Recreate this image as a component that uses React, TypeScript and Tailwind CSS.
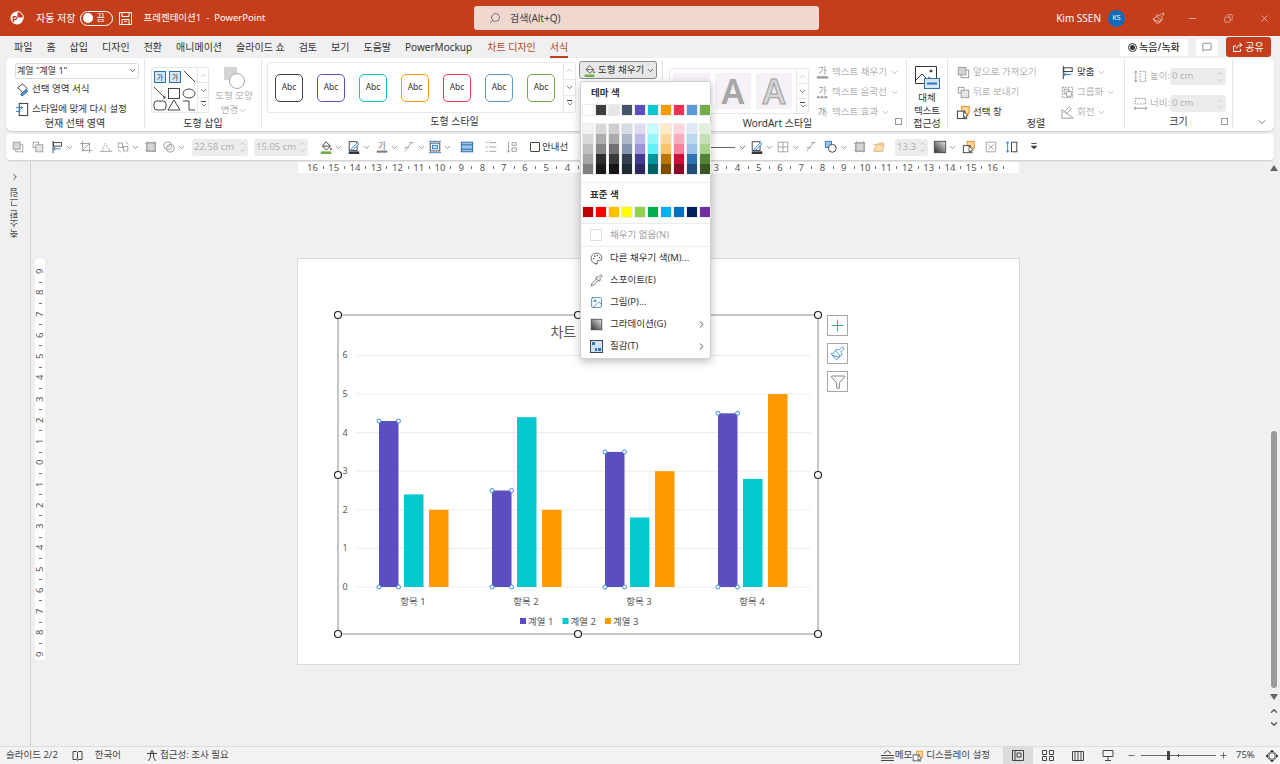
import React from "react";
import {
  ChevronDown,
  ChevronRight,
  ChevronUp,
  Copy,
  Funnel,
  Image,
  MessageSquare,
  Minus,
  Paintbrush,
  Palette,
  Pipette,
  Plus,
  Search,
  X,
} from "lucide-react";

const TABS = ["파일", "홈", "삽입", "디자인", "전환", "애니메이션", "슬라이드 쇼", "검토", "보기", "도움말", "PowerMockup"];
const THEME = ["#ffffff", "#3d3d3d", "#e7e6e6", "#44546a", "#5b4fc0", "#06c9cf", "#ff9a00", "#f23058", "#5b9bd5", "#70ad47"];
const SHADES = [
  ["#f2f2f2", "#d9d9d9", "#bfbfbf", "#a6a6a6", "#808080"],
  ["#d8d8d8", "#aeaeae", "#868686", "#2e2e2e", "#1a1a1a"],
  ["#d0cece", "#aeabab", "#757070", "#3a3838", "#171616"],
  ["#d6dce5", "#adb9ca", "#8497b0", "#333f50", "#222a35"],
  ["#dedcf2", "#bdb9e6", "#9d95d9", "#433a94", "#2d2763"],
  ["#c9fbfc", "#93f7fa", "#5df3f7", "#049599", "#026366"],
  ["#ffebcc", "#ffd699", "#ffc266", "#bf7300", "#804d00"],
  ["#fcd5dd", "#f9acbc", "#f6839b", "#d00d3a", "#8b0826"],
  ["#deebf7", "#bdd7ee", "#9dc3e6", "#2e75b6", "#1f4e79"],
  ["#e2efda", "#c5e0b4", "#a9d18e", "#548235", "#385723"],
];
const STANDARD = ["#c00000", "#ff0000", "#ffc000", "#ffff00", "#92d050", "#00b050", "#00b0f0", "#0070c0", "#002060", "#7030a0"];
const STYLE_COLORS = ["#404040", "#5b4fc0", "#06c9cf", "#ff9a00", "#f23058", "#5b9bd5", "#70ad47"];

// 막대 차트 데이터
const SERIES = [
  { color: "#5b4fc0", values: [4.3, 2.5, 3.5, 4.5], offset: 0 },
  { color: "#06c9cf", values: [2.4, 4.4, 1.8, 2.8], offset: 25 },
  { color: "#ff9a00", values: [2, 2, 3, 5], offset: 50 },
];
const GROUP_X = [379, 492, 605, 718];
const yOf = (v: number) => 587 - v * 38.6;

const Caret = ({ className = "text-[#555]" }: { className?: string }) => (
  <ChevronDown size={9} strokeWidth={2} className={className} />
);

// 작은 아이콘 묶음 (16x16)
const Ico = ({ name, c = "#9a9a9a", size = 16 }: { name: string; c?: string; size?: number }) => {
  const common = { fill: "none", stroke: c, strokeWidth: 1 };
  return (
    <svg width={size} height={size} viewBox="0 0 16 16" className="shrink-0">
      {name === "front" && (
        <>
          <rect x="5.5" y="5.5" width="8" height="8" {...common} />
          <rect x="2.5" y="2.5" width="8" height="8" fill="#d5d5d5" stroke={c} />
        </>
      )}
      {name === "back" && (
        <>
          <rect x="2.5" y="2.5" width="6" height="6" {...common} />
          <rect x="5.5" y="5.5" width="8" height="8" fill="#e5e5e5" stroke={c} />
        </>
      )}
      {name === "align" && (
        <>
          <path d="M3.5 1v14" stroke="#333" />
          <rect x="4" y="3" width="9" height="4" fill="#fff" stroke="#333" />
          <path d="M4 10h8M6 8l-2 2 2 2" stroke="#1f77c9" fill="none" />
        </>
      )}
      {name === "crop" && <path d="M4 1v11h11M1 4h11v11M3 13L13 3" {...common} />}
      {name === "edit" && <path d="M3 13L7 4l6 9H3zM1 13h14" {...common} strokeDasharray="2 1" />}
      {name === "text" && (
        <>
          <rect x="2.5" y="3.5" width="5" height="5" {...common} />
          <rect x="8.5" y="7.5" width="5" height="5" {...common} />
          <path d="M2 11l4 3M11 2l3 3" {...common} />
        </>
      )}
      {name === "shapeCircle" && (
        <>
          <circle cx="6.5" cy="6.5" r="4.5" {...common} />
          <circle cx="9.5" cy="9.5" r="4.5" {...common} />
          <path d="M6 9l4-4" {...common} />
        </>
      )}
      {name === "fill" && (
        <>
          <path d="M8 2l5 5-4.5 4.5L4 7l4-5z" fill="#fff" stroke="#333" />
          <path d="M4 7h9" stroke="#333" />
          <circle cx="13.5" cy="10" r="1" fill="#333" />
          <rect x="2" y="13" width="12" height="3" fill={c} />
        </>
      )}
      {name === "pen" && (
        <>
          <rect x="2.5" y="2" width="9" height="10" fill="#fff" stroke="#333" />
          <path d="M5 10l7-7 1.5 1.5-7 7L4 12z" fill="#fff" stroke="#1f77c9" />
          <rect x="2" y="13" width="12" height="3" fill={c} />
        </>
      )}
      {name === "gaText" && (
        <>
          <text x="8" y="10" fontSize="10" textAnchor="middle" fill={c}>
            가
          </text>
          <rect x="2" y="12" width="12" height="2.5" fill={c} />
        </>
      )}
      {name === "gaOutline" && (
        <>
          <text x="8" y="10" fontSize="10" textAnchor="middle" fill={c}>
            가
          </text>
          <path d="M2 13h12" stroke={c} strokeWidth="2" strokeDasharray="3 1" />
        </>
      )}
      {name === "gaFx" && (
        <>
          <text x="9" y="12" fontSize="10" textAnchor="middle" fill="#c8c8c8">
            가
          </text>
          <text x="7" y="11" fontSize="10" textAnchor="middle" fill={c}>
            가
          </text>
        </>
      )}
      {name === "tri" && <path d="M2 14h12L2 5zM4 8l6-6 2 2-6 6" {...common} />}
      {name === "tableH" && (
        <>
          <rect x="2.5" y="3.5" width="11" height="9" fill="#fff" stroke="#333" />
          <rect x="5" y="6" width="6" height="4" fill="#bcd6ef" stroke="#1f77c9" />
          <path d="M1 1.5h14M1 14.5h14" stroke="#1f77c9" />
        </>
      )}
      {name === "box" && (
        <>
          <rect x="1.5" y="2.5" width="13" height="11" fill="#9dc3e6" stroke="#1f5f9f" />
          <path d="M1.5 5.5h13M1.5 10.5h13" stroke="#1f5f9f" />
        </>
      )}
      {name === "bullet" && <path d="M2 3h2M6 3h8M2 8h2M6 8h8M2 13h2M6 13h8" {...common} />}
      {name === "sortText" && <path d="M4 2v12M2 12l2 2 2-2M8 3h5v3H8zM8 9h5v4H8z" {...common} />}
      {name === "table" && <path d="M2.5 2.5h11v11h-11zM8 2.5v11M2.5 8h11" {...common} />}
      {name === "slash" && <path d="M3 13L11 3M8 3h5M3 9l5-1" {...common} />}
      {name === "shapeBlue" && (
        <>
          <rect x="1.5" y="1.5" width="7" height="7" fill="#9dc3e6" stroke="#1f77c9" />
          <circle cx="9.5" cy="9.5" r="4.5" fill="#fff" stroke="#333" />
        </>
      )}
      {name === "dashBox" && (
        <>
          <rect x="3" y="3" width="10" height="10" fill="#d5d5d5" stroke={c} />
          <path d="M1 4h14M1 12h14M4 1v14M12 1v14" stroke={c} strokeDasharray="1 1" />
        </>
      )}
      {name === "folder" && <path d="M1.5 5h5l1-1.5h6v2H5L2 13h10l2-7.5" fill="#f6deb0" stroke="#dcb978" />}
      {name === "gradient" && (
        <>
          <defs>
            <linearGradient id="gr" x1="0" y1="1" x2="1" y2="0">
              <stop offset="0" stopColor="#2d2d2d" />
              <stop offset="1" stopColor="#e8e8e8" />
            </linearGradient>
          </defs>
          <rect x="1.5" y="1.5" width="13" height="13" fill="url(#gr)" stroke="#444" />
        </>
      )}
      {name === "selectPane" && (
        <>
          <rect x="6" y="1.5" width="8" height="8" fill="#ffd699" stroke="#e08a1e" />
          <rect x="1.5" y="6.5" width="8" height="8" fill="#fff" stroke="#333" />
          <path d="M8 7l5 4.5-2.5.3 1.3 2.7-1.3.5-1.2-2.7L8 13.5z" fill="#fff" stroke="#333" strokeWidth=".8" />
        </>
      )}
      {name === "xbox" && <path d="M2.5 2.5h11v11h-11zM5 5l6 6M11 5l-6 6" {...common} />}
      {name === "resize" && (
        <>
          <path d="M3 2v12M1.5 4L3 2l1.5 2M1.5 12L3 14l1.5-2" stroke="#1f77c9" fill="none" />
          <rect x="7.5" y="2.5" width="6" height="11" fill="#fff" stroke="#333" />
        </>
      )}
      {name === "more" && <path d="M5 4h6M5 7l3 3 3-3z" fill="#333" stroke="#333" />}
      {name === "group" && (
        <>
          <path d="M2.5 2.5h11v11h-11z" {...common} strokeDasharray="2 1" />
          <rect x="4.5" y="4.5" width="5" height="5" {...common} />
          <rect x="7" y="7" width="5" height="5" fill="#fff" stroke={c} />
        </>
      )}
      {name === "heightI" && (
        <>
          <path d="M3 2v12M1.5 4L3 2l1.5 2M1.5 12L3 14l1.5-2" {...common} />
          <rect x="7.5" y="2.5" width="6" height="11" {...common} strokeDasharray="2 1" />
        </>
      )}
      {name === "widthI" && (
        <>
          <rect x="2.5" y="2.5" width="11" height="6" {...common} strokeDasharray="2 1" />
          <path d="M1 13h14M3 11.5L1 13l2 1.5M13 11.5l2 1.5-2 1.5" {...common} />
        </>
      )}
      {name === "paintFormat" && (
        <>
          <path d="M3 6l5-4 5 5-4 5z" fill="#fff" stroke="#333" />
          <path d="M6 13l6-5 1.5 2-6 5z" fill="#5b9bd5" stroke="#1f5f9f" />
        </>
      )}
      {name === "resetStyle" && (
        <>
          <rect x="4.5" y="1.5" width="9" height="13" fill="#fff" stroke="#333" />
          <path d="M1 6h7M6 4l2 2-2 2M1 10h5" stroke="#1f77c9" fill="none" />
        </>
      )}
    </svg>
  );
};

const Tool = ({ w, name, c, caret }: { w: number; name: string; c?: string; caret?: boolean }) => (
  <div style={{ width: w }} className="flex items-center justify-center shrink-0">
    <Ico name={name} c={c} size={14} />
    {caret && <Caret className="text-[#777] ml-px" />}
  </div>
);

const Spin = ({ w, value }: { w: number; value: string }) => (
  <div style={{ width: w }} className="h-[17px] bg-[#ececec] rounded-[3px] flex items-center justify-between pl-[2px] pr-[2px] text-[9.5px] text-[#b3b3b3] shrink-0">
    <span>{value}</span>
    <span className="flex flex-col">
      <ChevronUp size={7} className="text-[#aaa]" />
      <ChevronDown size={7} className="text-[#aaa]" />
    </span>
  </div>
);

const Scroller = () => (
  <div className="w-[12px] flex flex-col border-l border-[#e8e8e8] shrink-0">
    <div className="flex-1 flex items-center justify-center border-b border-[#e8e8e8]">
      <ChevronUp size={9} className="text-[#bbb]" />
    </div>
    <div className="flex-1 flex items-center justify-center border-b border-[#e8e8e8]">
      <ChevronDown size={9} className="text-[#444]" />
    </div>
    <div className="flex-1 flex flex-col items-center justify-center">
      <span className="w-[5px] h-px bg-[#444] mb-px" />
      <ChevronDown size={8} className="text-[#444] -mt-[2px]" />
    </div>
  </div>
);

const Group = ({
  w,
  label,
  labelPr = 0,
  launcher,
  children,
}: {
  w: number;
  label: string;
  labelPr?: number;
  launcher?: boolean;
  children: React.ReactNode;
}) => (
  <div style={{ width: w }} className="h-full flex flex-col shrink-0 relative border-r border-[#e4e4e4] my-[2px] max-h-[68px]">
    <div className="h-[57px] flex">{children}</div>
    <div style={{ paddingRight: labelPr }} className="text-center text-[10px] leading-[13px] text-[#333]">
      {label}
    </div>
    {launcher && <span className="absolute right-[4px] bottom-[3px] w-[7px] h-[7px] border border-[#999]" />}
  </div>
);

const Opt = ({ icon, text, dis, caret, c }: { icon: string; text: string; dis?: boolean; caret?: boolean; c?: string }) => (
  <div className={`h-[20px] flex items-center gap-[2px] text-[9.5px] whitespace-nowrap ${dis ? "text-[#b3b3b3]" : "text-[#333]"}`}>
    <Ico name={icon} size={15} c={c} />
    <span>{text}</span>
    {caret && <Caret className="text-[#aaa] ml-px" />}
  </div>
);

const Swatch = ({ color }: { color: string }) => (
  <span style={{ backgroundColor: color }} className="w-[10px] h-[10px] outline outline-[#ececec]" />
);

const MenuItem = ({ icon, text, sub, dis }: { icon: React.ReactNode; text: string; sub?: boolean; dis?: boolean }) => (
  <div className={`h-[22px] flex items-center text-[9.5px] relative pl-[9px] ${dis ? "text-[#a0a0a0]" : "text-[#333]"}`}>
    <span className="w-[20px] flex items-center">{icon}</span>
    <span>{text}</span>
    {sub && <ChevronRight size={11} className="absolute right-[3px] text-[#444]" />}
  </div>
);

const FillMenu = () => (
  <div className="absolute left-0 top-[19px] z-50 w-[131px] h-[278px] bg-white border border-[#d0d0d0] rounded-[3px] shadow-[0_3px_8px_rgba(0,0,0,0.25)]">
    <div className="h-[22px] pl-[10px] flex items-center text-[9.5px] font-bold text-[#333]">테마 색</div>
    <div className="pl-[2px] flex gap-[3px] mt-[1px]">
      {THEME.map((c) => (
        <Swatch key={c} color={c} />
      ))}
    </div>
    <div className="pl-[2px] flex gap-[3px] mt-[9px]">
      {SHADES.map((col, i) => (
        <div key={i} className="flex flex-col outline outline-[#ececec]">
          {col.map((c) => (
            <span key={c} style={{ backgroundColor: c }} className="w-[10px] h-[10px]" />
          ))}
        </div>
      ))}
    </div>
    <div className="h-px bg-[#ececec] mt-[8px]" />
    <div className="h-[24px] pl-[9px] flex items-center text-[9.5px] font-bold text-[#333]">표준 색</div>
    <div className="pl-[2px] flex gap-[3px]">
      {STANDARD.map((c) => (
        <Swatch key={c} color={c} />
      ))}
    </div>
    <div className="h-px bg-[#ececec] mt-[6px]" />
    <MenuItem dis text="채우기 없음(N)" icon={<span className="w-[12px] h-[12px] border border-[#e0e0e0]" />} />
    <div className="h-px bg-[#ececec]" />
    <MenuItem text="다른 채우기 색(M)..." icon={<Palette size={13} strokeWidth={1.3} className="text-[#333]" />} />
    <MenuItem text="스포이트(E)" icon={<Pipette size={13} strokeWidth={1.2} className="text-[#333]" />} />
    <MenuItem text="그림(P)..." icon={<Image size={13} strokeWidth={1.3} className="text-[#1f5f9f]" />} />
    <MenuItem sub text="그라데이션(G)" icon={<Ico name="gradient" size={13} />} />
    <MenuItem
      sub
      text="질감(T)"
      icon={
        <svg width="13" height="13" viewBox="0 0 13 13">
          <rect x=".5" y=".5" width="12" height="12" fill="#cfe3f5" stroke="#444" />
          <path d="M2 2h3v3H2zM8 8h3v3H8zM5 8h2v3H5z" fill="#2e75b6" />
        </svg>
      }
    />
  </div>
);

const Chart = () => (
  <svg width="721" height="405" viewBox="298 259 721 405" className="block" fontFamily="'Noto Sans','Noto Sans CJK KR',sans-serif">
    <text x="578" y="337" fontSize="14" fill="#595959" textAnchor="middle">
      차트 제목
    </text>
    {[0, 1, 2, 3, 4, 5, 6].map((v) => (
      <g key={v}>
        <line x1="357" x2="810" y1={yOf(v)} y2={yOf(v)} stroke="#ececec" />
        <text x="345" y={yOf(v) + 3} fontSize="9" fill="#595959" textAnchor="middle">
          {v}
        </text>
      </g>
    ))}
    {SERIES.map((s) =>
      s.values.map((v, i) => (
        <rect key={s.color + i} x={GROUP_X[i] + s.offset} y={yOf(v)} width="19.5" height={v * 38.6} fill={s.color} />
      ))
    )}
    {SERIES[0].values.map((v, i) =>
      [
        [GROUP_X[i], yOf(v)],
        [GROUP_X[i] + 19.5, yOf(v)],
        [GROUP_X[i], 587],
        [GROUP_X[i] + 19.5, 587],
      ].map(([x, y], k) => <circle key={i + "-" + k} cx={x} cy={y} r="2" fill="#fff" stroke="#3d8ddb" />)
    )}
    {GROUP_X.map((x, i) => (
      <text key={x} x={x + 34} y="605" fontSize="9.5" fill="#595959" textAnchor="middle">
        항목 {i + 1}
      </text>
    ))}
    {SERIES.map((s, i) => (
      <g key={s.color}>
        <rect x={520 + i * 42.5} y="618" width="6" height="6" fill={s.color} />
        <text x={528 + i * 42.5} y="625" fontSize="9.5" fill="#595959">
          계열 {i + 1}
        </text>
      </g>
    ))}
    <rect x="338" y="315" width="480" height="319" fill="none" stroke="#8c8c8c" />
    {[
      [338, 315],
      [578, 315],
      [818, 315],
      [338, 475],
      [818, 475],
      [338, 634],
      [578, 634],
      [818, 634],
    ].map(([x, y]) => (
      <circle key={x + "-" + y} cx={x} cy={y} r="3.5" fill="#fff" stroke="#222" strokeWidth="1.2" />
    ))}
  </svg>
);

const ChartBtn = ({ children }: { children: React.ReactNode }) => (
  <div className="w-[21px] h-[21px] bg-white border border-[#a8a8a8] flex items-center justify-center">{children}</div>
);

const HRuler = () => {
  const nums = Array.from({ length: 33 }, (_, i) => Math.abs(16 - i));
  return (
    <div className="ml-[267px] w-[721px] h-[11px] bg-white flex items-center pl-[8px] text-[9.5px] leading-none text-[#555] overflow-hidden">
      {nums.map((n, i) => (
        <React.Fragment key={i}>
          <span className="w-[13px] text-center shrink-0">{n}</span>
          <span className="w-[8.25px] shrink-0 flex items-center justify-center">
            <span className="w-px h-[3px] bg-[#777]" />
          </span>
        </React.Fragment>
      ))}
    </div>
  );
};

const VRuler = () => {
  const nums = Array.from({ length: 19 }, (_, i) => Math.abs(9 - i));
  return (
    <div className="ml-[4px] w-[10px] h-[401px] bg-white flex flex-col items-center pt-[6px] text-[9.5px] leading-none text-[#555] overflow-hidden shrink-0">
      {nums.map((n, i) => (
        <React.Fragment key={i}>
          <span className="h-[13px] flex items-center justify-center shrink-0 [writing-mode:vertical-rl] rotate-180">{n}</span>
          <span className="h-[8.25px] shrink-0 flex items-center justify-center">
            <span className="w-[3px] h-px bg-[#777]" />
          </span>
        </React.Fragment>
      ))}
    </div>
  );
};

export default function App() {
  return (
    <div className="w-[1280px] h-[764px] overflow-hidden flex flex-col bg-[#f0f0f0] [font-family:'Noto_Sans','Noto_Sans_CJK_KR',sans-serif] text-[#333]">
      {/* 제목 표시줄 */}
      <div className="h-[36px] bg-[#c43e1c] flex items-center text-white shrink-0 relative">
        <svg width="14" height="14" viewBox="0 0 14 14" className="ml-[10px]">
          <circle cx="7" cy="7" r="6.5" fill="#fff" />
          <path d="M7 .5a6.5 6.5 0 0 1 6.5 6.5H7z" fill="#c43e1c" stroke="#fff" />
          <text x="2" y="11" fontSize="9" fontWeight="700" fill="#c43e1c">
            P
          </text>
        </svg>
        <span className="ml-[12px] text-[10px]">자동 저장</span>
        <div className="ml-[5px] w-[33px] h-[15px] rounded-full border border-white flex items-center pl-[2px] gap-[3px] text-[9px]">
          <span className="w-[10px] h-[10px] rounded-full bg-white" />끔
        </div>
        <svg width="13" height="13" viewBox="0 0 13 13" className="ml-[6px]" fill="none" stroke="#fff">
          <path d="M.5.5h12v12H.5zM3 .5v4h7v-4M3 12.5v-5h7v5M5 9.5h3" />
        </svg>
        <span className="ml-[11px] text-[9.5px]">프레젠테이션1&nbsp; -&nbsp; PowerPoint</span>
        <div className="absolute left-[474px] top-[6px] w-[345px] h-[24px] bg-[#f0d8d1] rounded-[3px] flex items-center pl-[15px] text-[#444] text-[10px]">
          <Search size={12} strokeWidth={1.3} className="-scale-x-100" />
          <span className="ml-[9px]">검색(Alt+Q)</span>
        </div>
        <div className="ml-auto flex items-center pr-[10px]">
          <span className="text-[10px] mr-[7px]">Kim SSEN</span>
          <span className="w-[17px] h-[17px] rounded-full bg-[#0f6cbd] flex items-center justify-center text-[7px]">KS</span>
          <Paintbrush size={13} strokeWidth={1.2} className="ml-[27px]" />
          <Minus size={11} strokeWidth={1.2} className="ml-[22px]" />
          <Copy size={9} strokeWidth={1.2} className="ml-[26px] -scale-x-100" />
          <X size={11} strokeWidth={1.2} className="ml-[26px]" />
        </div>
      </div>

      {/* 리본 탭 */}
      <div className="h-[22px] flex items-center pl-[14px] gap-[14px] text-[10px] shrink-0">
        {TABS.map((t) => (
          <span key={t} className="whitespace-nowrap">
            {t}
          </span>
        ))}
        <span className="text-[#b7472a] ml-px">차트 디자인</span>
        <span className="text-[#b7472a] h-[22px] flex items-center border-b-2 border-[#c43e1c] pt-[2px]">서식</span>
        <div className="ml-auto flex items-center pr-[9px] gap-[8px]">
          <div className="w-[68px] h-[17px] bg-white rounded-[3px] flex items-center justify-center gap-[2px] font-medium text-[10px]">
            <span className="w-[9px] h-[9px] rounded-full border border-[#333] flex items-center justify-center">
              <span className="w-[5px] h-[5px] rounded-full bg-[#333]" />
            </span>
            녹음/녹화
          </div>
          <div className="w-[22px] h-[17px] bg-white rounded-[3px] flex items-center justify-center">
            <MessageSquare size={10} strokeWidth={1.3} />
          </div>
          <div className="w-[45px] h-[20px] -my-px bg-[#c43e1c] text-white rounded-[3px] flex items-center justify-center gap-[2px] text-[10px]">
            <svg width="10" height="10" viewBox="0 0 10 10" fill="none" stroke="#fff">
              <path d="M3 4H.5v5.5h7V7M3.5 6.5C4 4 6 3 8 3M6.5 .8L9 3 6.5 5.2" />
            </svg>
            공유
          </div>
        </div>
      </div>

      {/* 리본 */}
      <div className="mx-[6px] h-[73px] bg-white rounded-[6px] shadow-[0_1px_2px_rgba(0,0,0,0.15)] flex shrink-0 relative z-10">
        <Group w={139} label="현재 선택 영역">
          <div className="pl-[9px] pt-[3px] flex flex-col">
            <div className="w-[124px] h-[17px] border border-[#dcdcdc] rounded-[3px] flex items-center justify-between px-[1px] text-[9px]">
              <span>계열 "계열 1"</span>
              <Caret className="text-[#333]" />
            </div>
            <div className="mt-[1px]">
              <Opt icon="paintFormat" text="선택 영역 서식" />
              <Opt icon="resetStyle" text="스타일에 맞게 다시 설정" />
            </div>
          </div>
        </Group>
        <Group w={117} label="도형 삽입">
          <div className="ml-[6px] mt-[7px] w-[58px] h-[46px] border border-[#e8e8e8] rounded-[3px] flex">
            <svg width="45" height="44" viewBox="0 0 45 44" fill="none" stroke="#444" className="shrink-0">
              <rect x="2.5" y="3.5" width="11" height="11" fill="#d6e6f6" stroke="#2e75b6" />
              <rect x="17.5" y="3.5" width="11" height="11" fill="#d6e6f6" stroke="#2e75b6" />
              <text x="8" y="12" fontSize="7" textAnchor="middle" fill="#333" stroke="none">
                가
              </text>
              <text x="23" y="12" fontSize="7" textAnchor="middle" fill="#333" stroke="none">
                가
              </text>
              <path d="M32 3l11 11M2 19l11 11M11 30h2v-2" />
              <rect x="16.5" y="20.5" width="11" height="10" />
              <ellipse cx="37" cy="25.5" rx="6" ry="4.5" />
              <rect x="2" y="33" width="12" height="9" rx="3" />
              <path d="M22 32l6 10H16zM31 33h6v9h6" />
            </svg>
            <Scroller />
          </div>
          <div className="ml-[4px] mt-[6px] w-[42px] flex flex-col items-center text-[9.5px] leading-[14px] text-[#b3b3b3]">
            <svg width="24" height="24" viewBox="0 0 24 24" className="-mb-[1px] shrink-0">
              <rect x="2" y="1" width="13" height="13" fill="#d4d4d4" />
              <circle cx="15" cy="15" r="7.5" fill="#fff" stroke="#aaa" />
            </svg>
            <span>도형 모양</span>
            <span className="flex items-center">
              변경 <Caret className="text-[#bbb]" />
            </span>
          </div>
        </Group>
        <Group w={401} label="도형 스타일" labelPr={15}>
          <div className="ml-[5px] mt-[2px] w-[309px] h-[51px] border border-[#e8e8e8] rounded-[3px] flex justify-between">
            <div className="flex items-center pl-[7px] gap-[14px]">
              {STYLE_COLORS.map((c) => (
                <div
                  key={c}
                  style={{ borderColor: c }}
                  className="w-[28px] h-[28px] border-[1.5px] rounded-[5px] flex items-center justify-center text-[8.5px]"
                >
                  Abc
                </div>
              ))}
            </div>
            <Scroller />
          </div>
          <div className="ml-[3px] relative w-[78px] h-[18px] mt-[1px] border border-[#8a8a8a] rounded-[3px] bg-[#e8e8e8] flex items-center pl-[3px] gap-[2px] text-[9.5px] whitespace-nowrap">
            <Ico name="fill" c="#70ad47" size={13} />
            <span>도형 채우기</span>
            <Caret className="text-[#333]" />
            <FillMenu />
          </div>
        </Group>
        <Group w={244} label="WordArt 스타일" launcher labelPr={14}>
          <div className="ml-[6px] mt-[8px] w-[140px] h-[46px] border border-[#e8e8e8] rounded-[3px] flex justify-between">
            <div className="flex items-center pl-[3px] gap-[5px]">
              <div className="w-[37px] h-[36px] bg-[#f5f1f6] flex items-center justify-center text-[34px] font-semibold leading-none text-transparent">A</div>
              <div className="w-[36px] h-[36px] bg-[#f5f1f6] flex items-center justify-center text-[34px] font-semibold leading-none text-[#a6a6a6]">A</div>
              <div className="w-[36px] h-[36px] bg-[#f5f1f6] flex items-center justify-center text-[34px] font-semibold leading-none text-[#d5d5d5] [-webkit-text-stroke:1px_#a0a0a0]">A</div>
            </div>
            <Scroller />
          </div>
          <div className="ml-[6px] pt-[2px]">
            <Opt dis caret icon="gaText" text="텍스트 채우기" />
            <Opt dis caret icon="gaOutline" text="텍스트 윤곽선" />
            <Opt dis caret icon="gaFx" text="텍스트 효과" />
          </div>
        </Group>
        <Group w={41} label="접근성">
          <div className="w-full pt-[5px] flex flex-col items-center text-[9.5px] leading-[13px]">
            <svg width="26" height="25" viewBox="0 0 26 25" className="shrink-0 mb-[1px]" fill="none" stroke="#333">
              <path d="M1.5 1.5h21v13M1.5 1.5v17h13" />
              <path d="M2 15l6-6 5 5 3-2" />
              <circle cx="17" cy="6" r="1" fill="#333" />
              <rect x="10.5" y="13.5" width="15" height="10" fill="#d6e6f6" stroke="#2e75b6" />
              <path d="M13 18.5h10" stroke="#2e75b6" strokeWidth="2" />
            </svg>
            <span>대체</span>
            <span>텍스트</span>
          </div>
        </Group>
        <Group w={177} label="정렬">
          <div className="pl-[8px] pt-[2px] w-[112px]">
            <Opt dis icon="front" text="앞으로 가져오기" />
            <Opt dis icon="back" text="뒤로 보내기" />
            <Opt icon="selectPane" text="선택 창" />
          </div>
          <div className="pt-[2px]">
            <Opt caret icon="align" text="맞춤" />
            <Opt dis caret icon="group" text="그룹화" />
            <Opt dis caret icon="tri" text="회전" />
          </div>
        </Group>
        <Group w={108} label="크기" launcher>
          <div className="pl-[8px] pt-[8px] flex flex-col gap-[10px]">
            <div className="flex items-center gap-[2px] text-[9.5px] text-[#b3b3b3]">
              <Ico name="heightI" size={15} />
              <span className="w-[18px] whitespace-nowrap">높이:</span>
              <Spin w={56} value="0 cm" />
            </div>
            <div className="flex items-center gap-[2px] text-[9.5px] text-[#b3b3b3]">
              <Ico name="widthI" size={15} />
              <span className="w-[18px] whitespace-nowrap">너비:</span>
              <Spin w={56} value="0 cm" />
            </div>
          </div>
        </Group>
        <div className="flex-1 flex justify-end items-end pr-[6px] pb-[3px]">
          <ChevronDown size={12} strokeWidth={1.3} />
        </div>
      </div>

      {/* 빠른 실행 도구 모음 */}
      <div className="mx-[6px] mt-[3px] h-[26px] bg-white rounded-[4px] shadow-[0_1px_2px_rgba(0,0,0,0.15)] flex items-center pl-[3px] text-[#333] shrink-0">
        <Tool w={18} name="front" />
        <Tool w={21} name="back" />
        <Tool w={28} name="align" caret />
        <Tool w={20} name="crop" />
        <Tool w={19} name="edit" />
        <Tool w={26} name="text" caret />
        <Tool w={20} name="dashBox" />
        <Tool w={26} name="shapeCircle" caret />
        <div className="w-[5px]" />
        <Spin w={56} value="22.58 cm" />
        <div className="w-[6px]" />
        <Spin w={54} value="15.05 cm" />
        <div className="w-[9px]" />
        <Tool w={28} name="fill" c="#70ad47" caret />
        <Tool w={28} name="pen" c="#333" caret />
        <Tool w={28} name="gaText" c="#808080" caret />
        <Tool w={25} name="slash" caret />
        <Tool w={28} name="tableH" caret />
        <Tool w={26} name="box" />
        <Tool w={21} name="bullet" />
        <Tool w={21} name="sortText" />
        <div className="w-[8px]" />
        <div className="flex items-center gap-[2px] text-[9.5px] whitespace-nowrap w-[170px]">
          <span className="w-[10px] h-[10px] border border-[#444] rounded-[1px]" />
          안내선
        </div>
        <div className="w-[34px] h-px bg-[#666] ml-[1px]" />
        <div className="w-[14px] flex justify-center">
          <Caret className="text-[#333]" />
        </div>
        <Tool w={26} name="pen" c="#333" caret />
        <Tool w={26} name="table" caret />
        <Tool w={20} name="slash" />
        <Tool w={30} name="shapeBlue" caret />
        <Tool w={17} name="dashBox" />
        <Tool w={22} name="folder" />
        <div className="w-[5px]" />
        <Spin w={33} value="13.3" />
        <div className="w-[4px]" />
        <Tool w={26} name="gradient" caret />
        <Tool w={22} name="selectPane" />
        <Tool w={21} name="xbox" />
        <Tool w={22} name="resize" />
        <Tool w={22} name="more" />
      </div>

      {/* 작업 영역 */}
      <div className="flex-1 flex min-h-0">
        <div className="w-[31px] border-r border-[#d4d4d4] flex flex-col items-center pt-[12px] shrink-0">
          <ChevronRight size={10} strokeWidth={2} />
          <span className="mt-[6px] text-[9.5px] text-[#555] [writing-mode:vertical-rl] rotate-180 whitespace-nowrap">축소판 그림</span>
        </div>
        <div className="flex-1 flex flex-col pt-[2px] min-w-0">
          <HRuler />
          <div className="flex mt-[86px]">
            <VRuler />
            <div className="ml-[253px] w-[721px] h-[405px] bg-white outline outline-[#d9d9d9] relative shrink-0">
              <Chart />
              <div className="absolute left-[529px] top-[56px] flex flex-col gap-[7px]">
                <ChartBtn>
                  <Plus size={19} strokeWidth={1} className="text-[#00a651]" />
                </ChartBtn>
                <ChartBtn>
                  <Paintbrush size={15} strokeWidth={1.2} className="text-[#1f77c9]" />
                </ChartBtn>
                <ChartBtn>
                  <Funnel size={16} strokeWidth={1} className="text-[#444]" />
                </ChartBtn>
              </div>
            </div>
          </div>
        </div>
        <div className="w-[12px] flex flex-col items-center shrink-0 relative text-[#555]">
          <span className="mt-[5px] w-0 h-0 border-x-[4px] border-x-transparent border-b-[6px] border-b-[#666]" />
          <span className="mt-[260px] w-[6px] h-[257px] bg-[#9b9b9b] rounded-full" />
          <span className="mt-[6px] w-0 h-0 border-x-[4px] border-x-transparent border-t-[6px] border-t-[#666]" />
          <div className="mt-[6px] flex flex-col items-center">
            <ChevronUp size={10} strokeWidth={3} className="text-[#555]" />
            <ChevronDown size={10} strokeWidth={3} className="text-[#555] mt-[3px]" />
          </div>
        </div>
      </div>

      {/* 상태 표시줄 */}
      <div className="h-[18px] border-t border-[#dcdcdc] bg-[#f3f3f3] flex items-center pl-[6px] text-[9.5px] text-[#444] shrink-0">
        <span>슬라이드 2/2</span>
        <svg width="11" height="11" viewBox="0 0 11 11" className="ml-[14px]" fill="none" stroke="#444">
          <path d="M1 1.5h3.5l1 1 1-1H10v8H6.5l-1 1-1-1H1zM5.5 2.5v7" />
        </svg>
        <span className="ml-[12px]">한국어</span>
        <svg width="12" height="12" viewBox="0 0 12 12" className="ml-[25px]" fill="none" stroke="#444">
          <circle cx="6" cy="2" r="1.3" />
          <path d="M1 3.5h10M4.5 4v3l-2 4M7.5 4v3l2 4" />
        </svg>
        <span className="ml-[2px]">접근성: 조사 필요</span>
        <div className="ml-auto flex items-center">
          <svg width="13" height="11" viewBox="0 0 13 11" fill="none" stroke="#444">
            <path d="M0 5.5h13M0 8h13M0 10.5h13M3 3.5L6.5.5l3.5 3" />
          </svg>
          <span className="ml-[1px]">메모</span>
          <Ico name="selectPane" size={12} c="#444" />
          <span className="ml-[2px] mr-[13px]">디스플레이 설정</span>
          <div className="w-[30px] h-[18px] bg-[#dcdcdc] flex items-center justify-center">
            <svg width="12" height="11" viewBox="0 0 12 11" fill="none" stroke="#444">
              <path d="M.5.5h11v10H.5zM3 .5v10M5 3h4v4H5z" />
            </svg>
          </div>
          <div className="w-[30px] flex justify-center">
            <svg width="12" height="11" viewBox="0 0 12 11" fill="none" stroke="#444">
              <path d="M.5.5h4v4h-4zM7.5.5h4v4h-4zM.5 6.5h4v4h-4zM7.5 6.5h4v4h-4z" />
            </svg>
          </div>
          <div className="w-[30px] flex justify-center">
            <svg width="12" height="11" viewBox="0 0 12 11" fill="none" stroke="#444">
              <path d="M.5 1.5h11v9H.5zM6 1.5v9M3 1.5v9M9 1.5v9" />
            </svg>
          </div>
          <div className="w-[30px] flex justify-center">
            <svg width="12" height="11" viewBox="0 0 12 11" fill="none" stroke="#444">
              <path d="M1 .5h10v6H1zM6 6.5v4M3 10.5h6" />
            </svg>
          </div>
          <Minus size={9} className="ml-[4px]" />
          <div className="ml-[5px] w-[75px] h-px bg-[#666] relative">
            <span className="absolute left-[26px] -top-[4px] w-[3px] h-[9px] bg-[#444]" />
            <span className="absolute left-[37px] -top-[1px] w-px h-[3px] bg-[#444]" />
          </div>
          <Plus size={9} className="ml-[3px]" />
          <span className="ml-[8px] w-[30px]">75%</span>
          <svg width="12" height="12" viewBox="0 0 12 12" className="mr-[2px]" fill="none" stroke="#444">
            <rect x="3" y="3" width="6" height="6" />
            <path d="M6 0L4.5 1.5h3zM6 12l-1.5-1.5h3zM0 6l1.5-1.5v3zM12 6l-1.5-1.5v3z" fill="#444" />
          </svg>
        </div>
      </div>
    </div>
  );
}
